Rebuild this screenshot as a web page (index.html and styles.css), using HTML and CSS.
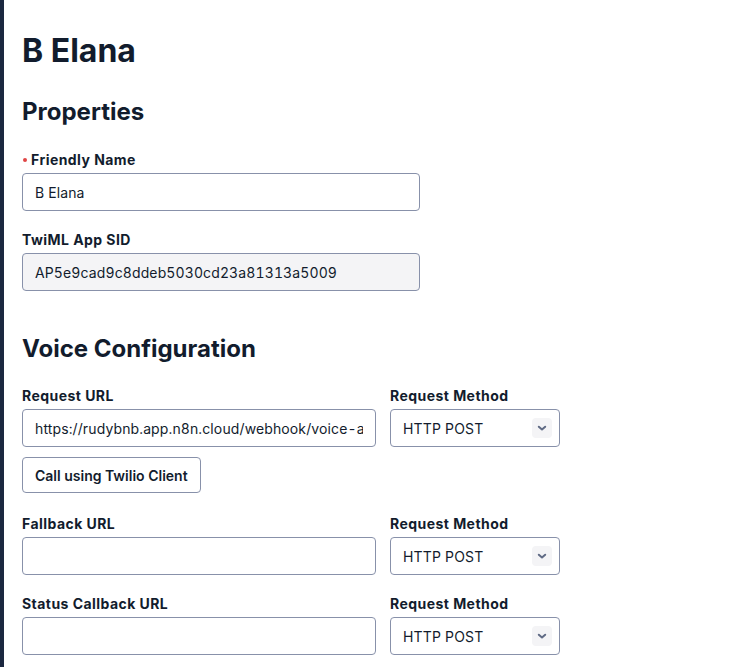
FILE: index.html
```html
<!DOCTYPE html>
<html lang="en">
<head>
<meta charset="utf-8">
<title>B Elana</title>
<link rel="stylesheet" href="styles.css">
</head>
<body>
<div class="layout">
  <div class="sidebar-edge"></div>
  <main class="content">
    <h1 class="page-title">B Elana</h1>

    <section class="section">
      <h2 class="section-title">Properties</h2>
      <div class="field field-wide">
        <label class="label"><span class="required-dot"></span>Friendly Name</label>
        <input class="input" type="text" value="B Elana">
      </div>
      <div class="field field-wide">
        <label class="label">TwiML App SID</label>
        <input class="input input-readonly" type="text" value="AP5e9cad9c8ddeb5030cd23a81313a5009" readonly>
      </div>
    </section>

    <section class="section section-voice">
      <h2 class="section-title section-title-tight">Voice Configuration</h2>

      <div class="row">
        <div class="field">
          <label class="label">Request URL</label>
          <input class="input" type="text" value="https://rudybnb.app.n8n.cloud/webhook/voice-agent">
        </div>
        <div class="field">
          <label class="label">Request Method</label>
          <div class="select">
            <span class="select-value">HTTP POST</span>
            <span class="select-chevron">
              <svg width="20" height="20" viewBox="0 0 20 20"><path d="M6.8 8.7 L10 11.5 L13.2 8.7" fill="none" stroke="#606b85" stroke-width="2" stroke-linecap="round" stroke-linejoin="round"/></svg>
            </span>
          </div>
        </div>
      </div>
      <button class="button" type="button">Call using Twilio Client</button>

      <div class="row row-spaced">
        <div class="field">
          <label class="label">Fallback URL</label>
          <input class="input" type="text" value="">
        </div>
        <div class="field">
          <label class="label">Request Method</label>
          <div class="select">
            <span class="select-value">HTTP POST</span>
            <span class="select-chevron">
              <svg width="20" height="20" viewBox="0 0 20 20"><path d="M6.8 8.7 L10 11.5 L13.2 8.7" fill="none" stroke="#606b85" stroke-width="2" stroke-linecap="round" stroke-linejoin="round"/></svg>
            </span>
          </div>
        </div>
      </div>

      <div class="row">
        <div class="field">
          <label class="label">Status Callback URL</label>
          <input class="input" type="text" value="">
        </div>
        <div class="field">
          <label class="label">Request Method</label>
          <div class="select">
            <span class="select-value">HTTP POST</span>
            <span class="select-chevron">
              <svg width="20" height="20" viewBox="0 0 20 20"><path d="M6.8 8.7 L10 11.5 L13.2 8.7" fill="none" stroke="#606b85" stroke-width="2" stroke-linecap="round" stroke-linejoin="round"/></svg>
            </span>
          </div>
        </div>
      </div>
    </section>
  </main>
</div>
</body>
</html>
```

FILE: styles.css
```css
* { box-sizing: border-box; }

html, body {
  margin: 0;
  padding: 0;
  background: #ffffff;
  height: 100%;
}

body {
  font-family: Inter, "Noto Sans", "Liberation Sans", sans-serif;
  color: #121c2d;
  overflow: hidden;
}

.layout {
  display: flex;
  min-height: 100%;
}

.sidebar-edge {
  width: 4px;
  flex: 0 0 4px;
  background: #1b2840;
}

.content {
  flex: 1;
  padding: 31px 0 0 18px;
}

.page-title {
  margin: 0 0 25px;
  font-size: 32px;
  line-height: 40px;
  font-weight: 700;
}

.section-title {
  margin: 0 0 22px;
  font-size: 24px;
  line-height: 32px;
  font-weight: 700;
}

.section-title-tight {
  margin-bottom: 21px;
}

.section-voice {
  margin-top: 42px;
}

.field {
  display: flex;
  flex-direction: column;
}

.field-wide {
  width: 398px;
  margin-bottom: 19px;
}

.label {
  display: flex;
  align-items: center;
  font-size: 14px;
  line-height: 20px;
  font-weight: 700;
  margin-bottom: 3px;
  letter-spacing: 0.45px;
}

.required-dot {
  width: 4px;
  height: 4px;
  border-radius: 50%;
  background: #e04545;
  margin: 0 4px 0 1px;
}

.input {
  height: 38px;
  width: 100%;
  padding: 0 12px;
  border: 1px solid #8891aa;
  border-radius: 4px;
  background: #ffffff;
  font-family: inherit;
  font-size: 14px;
  letter-spacing: 0.12px;
  font-feature-settings: "tnum" 1;
  color: #121c2d;
  outline: none;
}

.input-readonly {
  background: #f4f4f6;
}

.row {
  display: grid;
  grid-template-columns: 354px 170px;
  column-gap: 14px;
  margin-bottom: 19px;
}

.row-spaced {
  margin-top: 21px;
}

.select {
  height: 38px;
  border: 1px solid #8891aa;
  border-radius: 4px;
  display: flex;
  align-items: center;
  justify-content: space-between;
  padding: 0 7px 0 12px;
  font-size: 14px;
  letter-spacing: 0.15px;
}

.select-chevron {
  width: 20px;
  height: 20px;
  border-radius: 4px;
  background: #f4f4f6;
  display: flex;
}

.button {
  display: block;
  margin-top: -9px;
  height: 36px;
  padding: 0 12px;
  border: 1px solid #8891aa;
  border-radius: 4px;
  background: #ffffff;
  font-family: inherit;
  font-size: 14px;
  font-weight: 600;
  color: #121c2d;
}
```
